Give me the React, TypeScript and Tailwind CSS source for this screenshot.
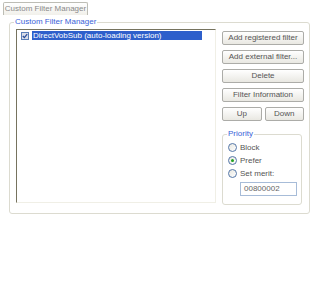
import React from "react";

const BUTTONS = ["Add registered filter", "Add external filter...", "Delete", "Filter Information"];

function XpButton({ label, className = "" }: { label: string; className?: string }) {
  return (
    <button
      className={`h-[14px] rounded-[2px] border border-[#acaca8] bg-gradient-to-b from-white to-[#e9e8e2] text-[8px] leading-[12px] text-[#555] ${className}`}
    >
      {label}
    </button>
  );
}

function Radio({ label, checked }: { label: string; checked?: boolean }) {
  return (
    <div className="flex h-[13px] items-center gap-[3px]">
      <span className="flex h-[9px] w-[9px] items-center justify-center rounded-full border border-[#5577a8] bg-gradient-to-br from-[#e6e6e0] to-white">
        {checked && <span className="h-[3px] w-[3px] rounded-full bg-[#21a121]" />}
      </span>
      <span className="text-[8px] leading-[10px] text-[#555]">{label}</span>
    </div>
  );
}

export default function App() {
  return (
    <div
      className="h-[298px] w-[320px] overflow-hidden bg-white pt-[2px]"
      style={{ fontFamily: '"Liberation Sans", Arial, sans-serif' }}
    >
      {/* Tab */}
      <div className="ml-[3px] flex h-[13px] w-[85px] items-center justify-center rounded-t-[2px] border border-b-0 border-[#bdbdb5] bg-gradient-to-b from-white to-[#f1f0ea] text-[8px] text-[#8a8a8a]">
        Custom Filter Manager
      </div>

      {/* Outer group */}
      <fieldset className="ml-[9px] mt-[2px] h-[197px] w-[301px] rounded-[3px] border border-[#dcdbd0]">
        <legend className="ml-[4px] px-[1px] text-[8px] leading-[10px] text-[#3a62d8]">Custom Filter Manager</legend>
        <div className="flex items-start gap-[6px] pl-[6px]">
          {/* List */}
          <div className="mt-[2px] h-[174px] w-[200px] border border-l-[#76735e] border-t-[#76735e] border-r-[#f0efe6] border-b-[#f0efe6] bg-white pt-[1px]">
            <div className="flex h-[9px] items-center">
              <span className="ml-[4px] flex h-[8px] w-[8px] items-center justify-center border border-[#5a7eb8] bg-[#d9dde8]">
                <svg width="6" height="6" viewBox="0 0 6 6">
                  <path d="M0.8 3 L2.4 4.6 L5.2 1.2" fill="none" stroke="#2a4d9a" strokeWidth="1.3" />
                </svg>
              </span>
              <span className="ml-[3px] flex h-[9px] w-[170px] items-center bg-[#2e5fcb] pl-[1px] text-[8px] leading-[9px] text-white">
                DirectVobSub (auto-loading version)
              </span>
            </div>
          </div>

          {/* Buttons */}
          <div className="mt-[4px] flex w-[82px] flex-col gap-[5px]">
            {BUTTONS.map((b) => (
              <XpButton key={b} label={b} className="w-full" />
            ))}
            <div className="flex gap-[3px]">
              <XpButton label="Up" className="flex-1" />
              <XpButton label="Down" className="flex-1" />
            </div>

            {/* Priority */}
            <fieldset className="mt-[3px] h-[76px] w-[80px] rounded-[3px] border border-[#dcdbd0]">
              <legend className="ml-[4px] px-[1px] text-[8px] leading-[10px] text-[#3a62d8]">Priority</legend>
              <div className="flex flex-col pl-[5px] pt-[2px]">
                <Radio label="Block" />
                <Radio label="Prefer" checked />
                <Radio label="Set merit:" />
                <div className="ml-[12px] mt-[2px] flex h-[14px] w-[57px] items-center border border-[#a7bcd8] pl-[3px] text-[8px] text-[#666]">
                  00800002
                </div>
              </div>
            </fieldset>
          </div>
        </div>
      </fieldset>
    </div>
  );
}
